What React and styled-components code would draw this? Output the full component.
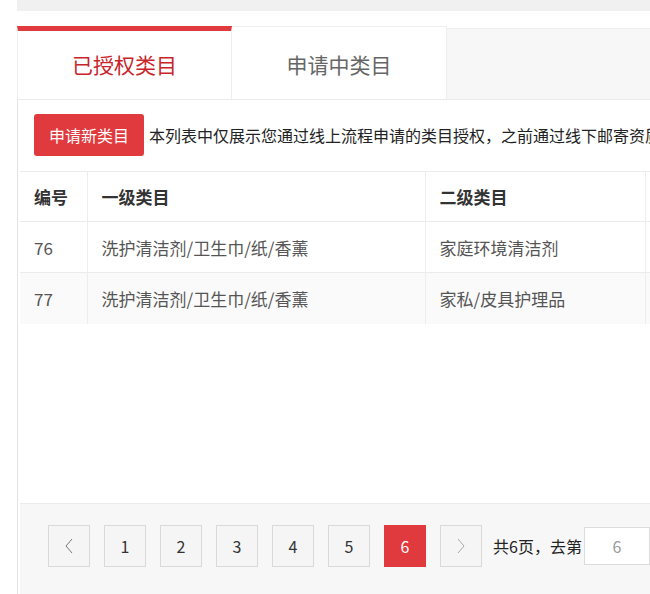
import styled, { createGlobalStyle } from "styled-components";

const GlobalStyle = createGlobalStyle`
  html, body {
    margin: 0;
    padding: 0;
    background: #fff;
    font-family: "Noto Sans CJK SC", "Microsoft YaHei", sans-serif;
  }
  * {
    box-sizing: border-box;
  }
`;

const red = "#e0393e";

const Page = styled.div`
  width: 650px;
  height: 594px;
  overflow: hidden;
  padding-left: 17px;
  display: flex;
  flex-direction: column;
`;

const TopStrip = styled.div`
  height: 11px;
  background: #f0f0f0;
  flex-shrink: 0;
`;

const TabBar = styled.div`
  display: flex;
  height: 74px;
  margin-top: 15px;
  flex-shrink: 0;
  border-bottom: 1px solid #ebebeb;
`;

const Tab = styled.div`
  width: 215px;
  display: flex;
  align-items: center;
  justify-content: center;
  background: #fff;
  font-size: 21px;
  color: ${(p) => (p.$active ? "#c8252b" : "#666")};
  border-top: ${(p) => (p.$active ? `5px solid ${red}` : "1px solid #eee")};
  border-right: 1px solid #eee;
  border-left: ${(p) => (p.$active ? "1px solid #eee" : "none")};
  padding-bottom: ${(p) => (p.$active ? "2px" : "0")};
  padding-top: ${(p) => (p.$active ? "0" : "2px")};
`;

const TabRest = styled.div`
  flex: 1;
  margin-top: 2px;
  background: #f7f7f7;
  border-top: 1px solid #eee;
`;

const Panel = styled.div`
  flex: 1;
  display: flex;
  flex-direction: column;
  border-left: 1px solid #e3e3e3;
  padding-left: 2px;
  overflow: hidden;
`;

const Body = styled.div`
  flex: 1;
  padding-top: 14px;
`;

const Notice = styled.div`
  display: flex;
  align-items: center;
  white-space: nowrap;
  font-size: 16px;
  color: #222;
  padding-left: 14px;
`;

const RedButton = styled.button`
  flex-shrink: 0;
  width: 110px;
  height: 42px;
  margin-right: 5px;
  border: none;
  border-radius: 3px;
  background: ${red};
  color: #fff;
  font-family: inherit;
  font-size: 16px;
  cursor: pointer;
`;

const Table = styled.table`
  margin-top: 15px;
  border-collapse: collapse;
  table-layout: fixed;
  width: 760px;
  font-size: 17px;
  color: #555;
`;

const Row = styled.tr`
  height: ${(p) => (p.$head ? "50px" : "51px")};
  background: ${(p) => (p.$alt ? "#fafafa" : "#fff")};
  border-top: 1px solid #ebebeb;
`;

const Th = styled.th`
  text-align: left;
  font-weight: 700;
  color: #333;
  padding: 0 14px;
  border-right: 1px solid #ededed;
`;

const Td = styled.td`
  padding: 0 14px;
  border-right: 1px solid #ededed;
  white-space: nowrap;
`;

const Footer = styled.div`
  height: 91px;
  flex-shrink: 0;
  background: #f7f7f7;
  border-top: 1px solid #ebebeb;
  display: flex;
  align-items: flex-start;
  padding: 21px 0 0 28px;
  white-space: nowrap;
`;

const PageBtn = styled.div`
  width: 42px;
  height: 42px;
  flex-shrink: 0;
  margin-right: 14px;
  display: flex;
  align-items: center;
  justify-content: center;
  font-size: 16px;
  color: ${(p) => (p.$active ? "#fff" : "#333")};
  background: ${(p) => (p.$active ? red : "#f5f5f5")};
  border: 1px solid ${(p) => (p.$active ? red : "#d9d9d9")};
`;

const Total = styled.span`
  font-size: 16px;
  color: #222;
  line-height: 42px;
  margin-left: -3px;
  margin-right: 2px;
`;

const GoInput = styled.div`
  width: 66px;
  height: 38px;
  margin-top: 2px;
  flex-shrink: 0;
  background: #fff;
  border: 1px solid #dcdcdc;
  display: flex;
  align-items: center;
  justify-content: center;
  font-size: 16px;
  color: #999;
`;

const Chevron = ({ dir }) => (
  <svg width="10" height="16" viewBox="0 0 10 16">
    <polyline
      points={dir === "left" ? "8,1 2,8 8,15" : "2,1 8,8 2,15"}
      fill="none"
      stroke={dir === "left" ? "#777" : "#aaa"}
      strokeWidth="1"
    />
  </svg>
);

const rows = [
  { id: 76, first: "洗护清洁剂/卫生巾/纸/香薰", second: "家庭环境清洁剂" },
  { id: 77, first: "洗护清洁剂/卫生巾/纸/香薰", second: "家私/皮具护理品" },
];

export default function App() {
  return (
    <>
      <GlobalStyle />
      <Page>
        <TopStrip />
        <TabBar>
          <Tab $active>已授权类目</Tab>
          <Tab>申请中类目</Tab>
          <TabRest />
        </TabBar>
        <Panel>
          <Body>
            <Notice>
              <RedButton>申请新类目</RedButton>
              本列表中仅展示您通过线上流程申请的类目授权，之前通过线下邮寄资质申请的类目授权请联系小二查询
            </Notice>
            <Table>
              <colgroup>
                <col style={{ width: 67 }} />
                <col style={{ width: 338 }} />
                <col style={{ width: 220 }} />
                <col style={{ width: 135 }} />
              </colgroup>
              <thead>
                <Row $head>
                  <Th>编号</Th>
                  <Th>一级类目</Th>
                  <Th>二级类目</Th>
                  <Th />
                </Row>
              </thead>
              <tbody>
                {rows.map((r, i) => (
                  <Row key={r.id} $alt={i % 2 === 1}>
                    <Td>{r.id}</Td>
                    <Td>{r.first}</Td>
                    <Td>{r.second}</Td>
                    <Td />
                  </Row>
                ))}
              </tbody>
            </Table>
          </Body>
          <Footer>
            <PageBtn>
              <Chevron dir="left" />
            </PageBtn>
            {[1, 2, 3, 4, 5, 6].map((n) => (
              <PageBtn key={n} $active={n === 6}>
                {n}
              </PageBtn>
            ))}
            <PageBtn>
              <Chevron dir="right" />
            </PageBtn>
            <Total>共6页，去第</Total>
            <GoInput>6</GoInput>
          </Footer>
        </Panel>
      </Page>
    </>
  );
}
